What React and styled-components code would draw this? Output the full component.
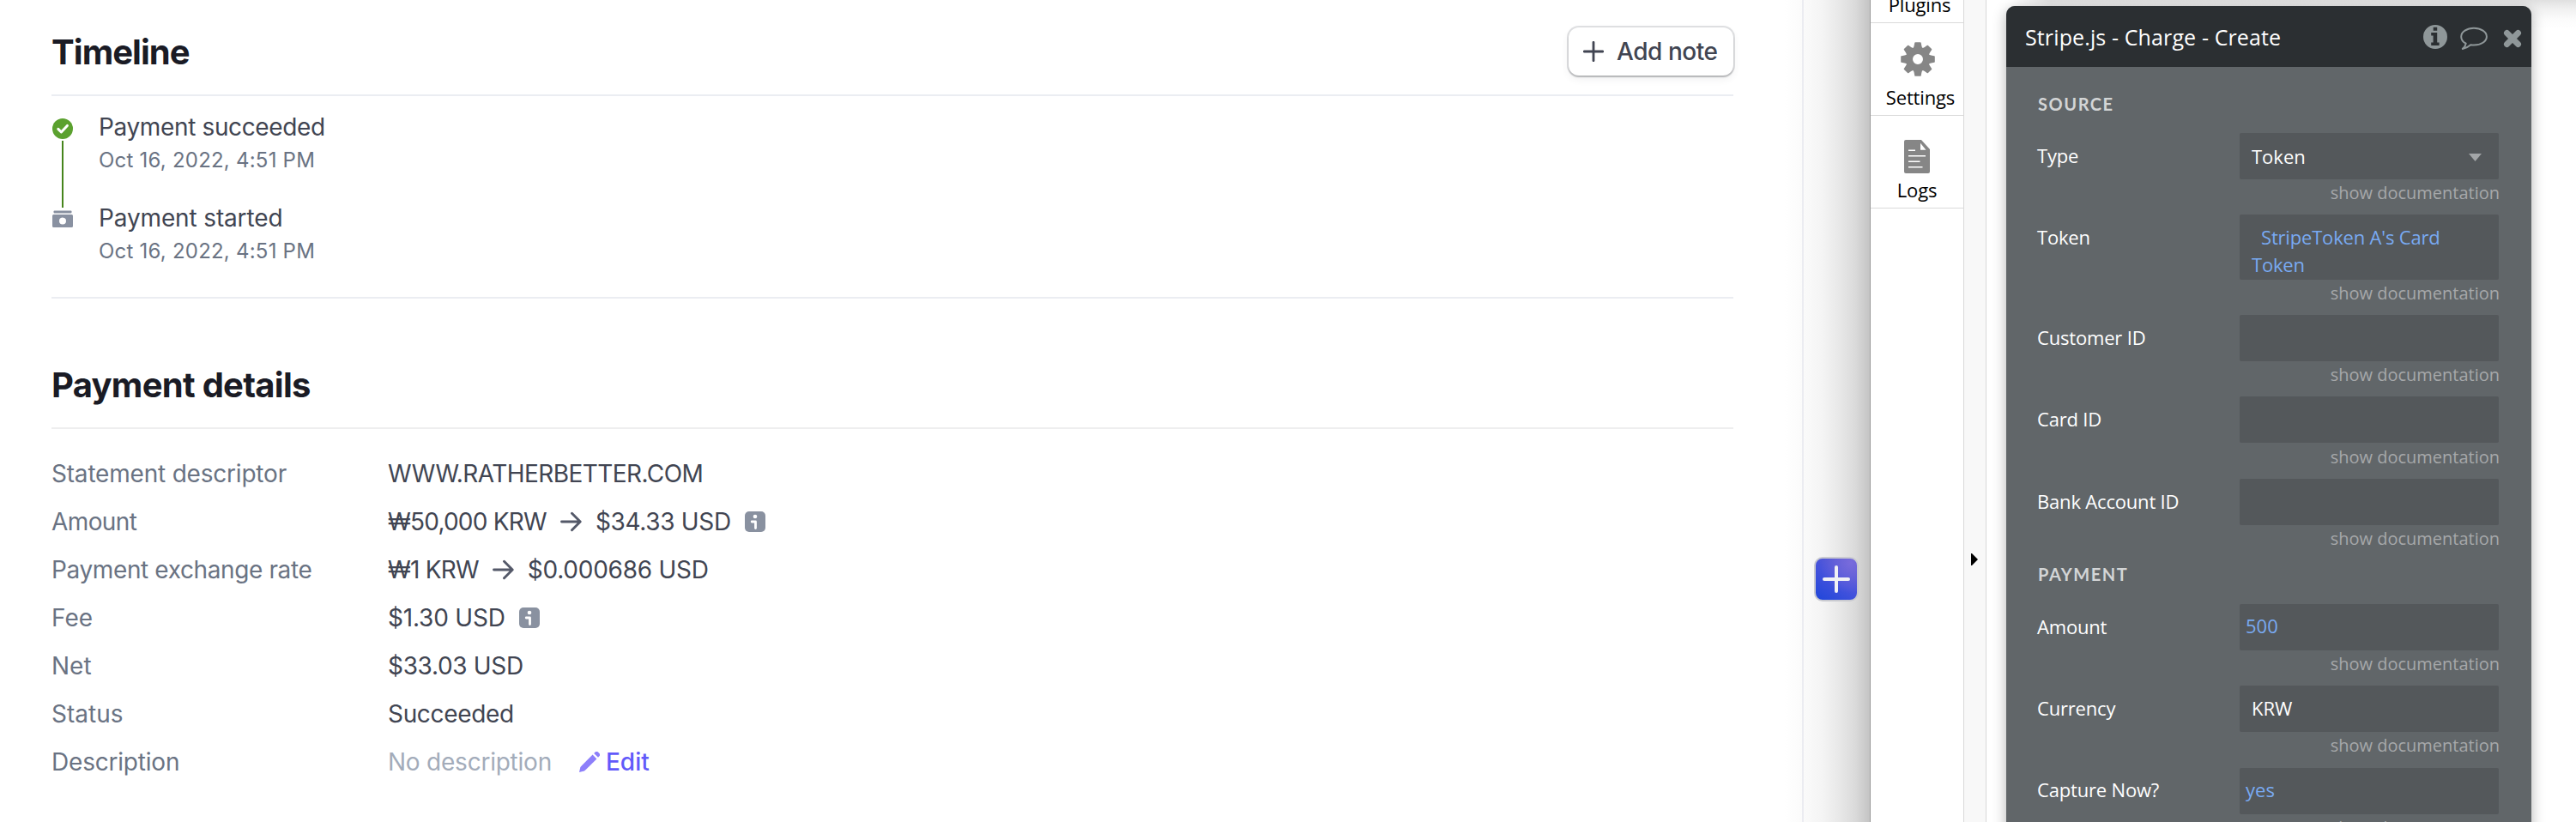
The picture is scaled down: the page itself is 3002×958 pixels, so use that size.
import React from "react";
import styled, { createGlobalStyle } from "styled-components";

const Global = createGlobalStyle`
  *, *::before, *::after { box-sizing: border-box; }
  body { margin: 0; background: #fff; }
`;

const Page = styled.div`
  display: flex;
  width: 3002px;
  height: 958px;
  overflow: hidden;
  background:
    linear-gradient(to right, #ffffff 0, #fbfbfb 20px, #f4f4f4 44px, #e9e9e9 62px, #dadada 82px, #c4c4c4 99px, #9d9d9d 99px, #9d9d9d 100px) 2080px 0 / 100px 100% no-repeat,
    #ffffff;
`;

const Dashboard = styled.main`
  width: 2102px;
  padding: 10px 80px 0 60px;
  border-right: 2px solid #ebecf1;
  font-family: Inter, "Liberation Sans", sans-serif;
  color: #414552;
`;

const SectionHeader = styled.header`
  display: flex;
  align-items: center;
  justify-content: space-between;
  height: ${(p) => p.$height}px;
  padding-top: ${(p) => p.$top || 0}px;
  border-bottom: 2px solid ${(p) => p.$line || "#ebedf2"};
`;

const Heading = styled.h2`
  margin: 0;
  padding-top: ${(p) => p.$drop || 0}px;
  font-size: 40px;
  line-height: 56px;
  font-weight: 700;
  letter-spacing: ${(p) => p.$track || 0}px;
  color: #1a1b25;
`;

const NoteButton = styled.button`
  display: flex;
  align-items: center;
  gap: 15px;
  width: 192px;
  height: 56px;
  padding: 0 0 0 17px;
  border: 0;
  border-radius: 12px;
  background: #fff;
  box-shadow: 0 2px 2px rgba(0, 0, 0, 0.16), 0 0 0 2px rgba(64, 68, 82, 0.16), 0 4px 10px rgba(64, 68, 82, 0.08);
  font: 500 28px/40px Inter, "Liberation Sans", sans-serif;
  letter-spacing: -0.45px;
  white-space: nowrap;
  color: #414552;
  svg { flex: none; }
`;

const Timeline = styled.ol`
  display: flex;
  flex-direction: column;
  height: 236px;
  margin: 0;
  padding: 16px 0 0;
  list-style: none;
  border-bottom: 2px solid #ebedf2;
`;

const Event = styled.li`
  display: flex;
  gap: 30px;
  height: 106px;
  padding-left: 1px;
`;

const Rail = styled.div`
  display: flex;
  flex-direction: column;
  align-items: center;
  gap: 2px;
  width: 24px;
  padding-top: 10px;
  svg { flex: none; }
`;

const Connector = styled.span`
  flex: none;
  width: 2px;
  height: 78px;
  background: #46851c;
`;

const EventTitle = styled.div`
  font-size: 28px;
  line-height: 40px;
  letter-spacing: ${(p) => p.$track || 0}px;
`;

const EventTime = styled.div`
  margin-top: 3px;
  font-size: 24px;
  line-height: 32px;
  letter-spacing: 0.22px;
  color: #6a7383;
`;

const Details = styled.dl`
  margin: 0;
  padding-top: 24px;
`;

const Row = styled.div`
  display: flex;
  align-items: center;
  height: 56px;
  font-size: 28px;
  line-height: 40px;
`;

const Term = styled.dt`
  width: 392px;
  letter-spacing: ${(p) => p.$track || 0}px;
  color: #6a7383;
`;

const Value = styled.dd`
  display: flex;
  align-items: center;
  gap: 16px;
  margin: 0;
`;

const Figure = styled.span`
  letter-spacing: ${(p) => p.$track || 0}px;
`;

const Muted = styled.span`
  margin-right: 16px;
  letter-spacing: -0.23px;
  color: #a3acba;
`;

const EditLink = styled.a`
  display: flex;
  align-items: center;
  gap: 7px;
  font-weight: 500;
  color: #625afa;
`;

const Gutter = styled.div`
  width: 78px;
  padding: 649px 12px 0;
`;

const Badge = styled.div`
  display: flex;
  align-items: center;
  justify-content: center;
  width: 52px;
  height: 52px;
  border-radius: 10px;
  border: 2px solid #c9cad0;
  background: radial-gradient(circle at 85% 10%, #786bdc 0%, rgba(120, 107, 220, 0) 60%), linear-gradient(35deg, #1f46da 0%, #4653dc 50%, #5b5ace 100%);
`;

const Sidebar = styled.nav`
  width: 109px;
  background: #fff;
  border-right: 1px solid #d9d9d9;
  font-family: "Open Sans", "Noto Sans", sans-serif;
`;

const Tool = styled.div`
  display: flex;
  flex-direction: column;
  align-items: center;
  justify-content: flex-end;
  height: ${(p) => p.$height || 108}px;
  padding: 0 0 6px ${(p) => p.$indent || 0}px;
  border-bottom: 1px solid #dadada;
  font-size: 22px;
  line-height: 30px;
  letter-spacing: -0.15px;
  overflow: hidden;
  color: #000;
  svg {
    flex: none;
    margin-bottom: ${(p) => p.$gap || 0}px;
    margin-right: ${(p) => p.$nudge || 0}px;
  }
`;

const Handle = styled.div`
  width: 26px;
  padding: 645px 0 0 8px;
  background: #f8f8f8;
  border-right: 1px solid #d9d9d9;
  svg { display: block; }
`;

const Canvas = styled.section`
  flex: 1;
  padding: 7px 0 0 23px;
  background:
    linear-gradient(to right, #ffffff 30px, rgba(255, 255, 255, 0) 75px),
    linear-gradient(to bottom, #e0e0e0 0, #f0f0f0 10px, #fbfbfb 22px, #ffffff 34px);
  font-family: "Open Sans", "Noto Sans", sans-serif;
`;

const Panel = styled.div`
  width: 612px;
  height: 1100px;
  border-radius: 10px;
  background: #616669;
  box-shadow: 0 4px 16px rgba(0, 0, 0, 0.3);
`;

const PanelHeader = styled.header`
  display: flex;
  align-items: center;
  height: 71px;
  padding: 0 11px 0 22px;
  border-radius: 10px 10px 0 0;
  background: #2b2f32;
  color: #fff;
  font-size: 25px;
  line-height: 36px;
  letter-spacing: 0.12px;
`;

const PanelTitle = styled.span`
  flex: 1;
  padding-top: 1px;
`;

const SectionLabel = styled.h3`
  margin: 0;
  height: ${(p) => p.$height}px;
  padding: ${(p) => p.$top}px 0 0 37px;
  font: 700 20px/26px Lato, "Open Sans", sans-serif;
  letter-spacing: 1.55px;
  color: #d3d5d6;
`;

const Field = styled.div`
  display: flex;
  padding-left: 36px;
`;

const Label = styled.label`
  width: 236px;
  font-size: 22px;
  line-height: ${(p) => (p.$raised ? 51 : 53)}px;
  letter-spacing: -0.18px;
  color: #fff;
`;

const Control = styled.div`
  width: 302px;
`;

const Box = styled.div`
  display: flex;
  justify-content: space-between;
  height: ${(p) => p.$height || 54}px;
  padding: ${(p) => p.$drop || 0}px 20px 0 ${(p) => (p.$tight ? 7 : 14)}px;
  border-radius: 2px;
  background: #54585b;
  font-size: 22px;
  line-height: ${(p) => (p.$tight ? 51 : 53)}px;
  color: ${(p) => (p.$expr ? "#79aaf2" : "#fff")};
  svg { margin-top: 23px; }
`;

const Expression = styled.div`
  padding-top: 11px;
  line-height: 31.6px;
  letter-spacing: -0.18px;
  text-indent: 11px;
`;

const Doc = styled.div`
  height: ${(p) => p.$height || 41}px;
  margin-right: -1px;
  padding-top: ${(p) => p.$drop || 0}px;
  font-size: 20px;
  line-height: 32px;
  text-align: right;
  color: #a6a8aa;
`;

const Check = () => (
  <svg width="24" height="24" viewBox="0 0 24 24">
    <circle cx="12" cy="12" r="12" fill="#5ba12f" />
    <path d="M6.8 12.4l3.6 3.6 7-7.6" fill="none" stroke="#fff" strokeWidth="3" strokeLinecap="round" strokeLinejoin="round" />
  </svg>
);

const Cash = () => (
  <svg width="24" height="24" viewBox="0 0 24 24">
    <rect x="1.5" y="1.5" width="21" height="3" rx="1" fill="#8991a1" />
    <path
      fillRule="evenodd"
      d="M1.5 6h21A1.5 1.5 0 0 1 24 7.500v12a1.500 1.500 0 0 1-1.500 1.500h-21A1.500 1.500 0 0 1 0 19.500v-12A1.500 1.500 0 0 1 1.500 6zM12 9.500a4 4 0 1 0 0 8 4 4 0 0 0 0-8z"
      fill="#8991a1"
    />
  </svg>
);

const Plus = () => (
  <svg width="24" height="24" viewBox="0 0 24 24">
    <path d="M12 1.300v21.400M1.300 12h21.400" stroke="#414552" strokeWidth="2.800" strokeLinecap="round" />
  </svg>
);

const Arrow = () => (
  <svg width="25" height="24" viewBox="0 0 25 24">
    <path d="M1.500 12H23M13.500 2.300L23.200 12l-9.700 9.700" fill="none" stroke="#545969" strokeWidth="2.900" strokeLinecap="round" strokeLinejoin="round" />
  </svg>
);

const Info = () => (
  <svg width="24" height="24" viewBox="0 0 24 24">
    <rect width="24" height="24" rx="5" fill="#8991a0" />
    <circle cx="12" cy="6" r="2.300" fill="#fff" />
    <path d="M8.200 12h4.300v7.500" fill="none" stroke="#fff" strokeWidth="2.800" strokeLinecap="round" strokeLinejoin="round" />
  </svg>
);

const Pencil = () => (
  <svg width="24" height="24" viewBox="0 0 24 24" fill="#8d7ffa">
    <path d="M15.600 3.600l4.800 4.800L8 20.800 6 22.600 0 24l1.400-6 1.800-2z" />
    <path d="M17.200 2l1.200-1.200a2.700 2.700 0 0 1 3.800 0l1 1a2.700 2.700 0 0 1 0 3.800L22 6.800z" />
  </svg>
);

const BadgePlus = () => (
  <svg width="32" height="32" viewBox="0 0 32 32">
    <path d="M16 2v28M2 16h28" stroke="#f1f1f4" strokeWidth="4" strokeLinecap="round" />
  </svg>
);

const Gear = () => (
  <svg width="40" height="40" viewBox="-20 -20 40 40">
    <circle r="10" fill="none" stroke="#868686" strokeWidth="8" />
    {[0, 45, 90, 135, 180, 225, 270, 315].map((angle) => (
      <path
        key={angle}
        d="M-6-12.400Q-4.700-13.500-4.400-15.500L-3.700-19.200Q-3.500-19.800-2.900-19.800H2.900Q3.500-19.800 3.700-19.200L4.400-15.500Q4.700-13.500 6-12.400L4-10H-4z"
        fill="#868686"
        transform={`rotate(${angle})`}
      />
    ))}
  </svg>
);

const Log = () => (
  <svg width="30" height="39" viewBox="0 0 30 39">
    <path d="M2 0h18l10 11v26a2 2 0 0 1-2 2H2a2 2 0 0 1-2-2V2a2 2 0 0 1 2-2z" fill="#868686" />
    <path d="M19 3.800v8h6.500z" fill="#fff" />
    <path d="M5 12.200h8M5 18.700h20M5 25.200h13.500M5 31.700h16.500" stroke="#fff" strokeWidth="1.600" />
  </svg>
);

const Caret = () => (
  <svg width="8" height="14" viewBox="0 0 8 14">
    <path d="M0 0h1l7 7-7 7H0z" fill="#000" />
  </svg>
);

const SelectArrow = () => (
  <svg width="15" height="9" viewBox="0 0 15 9">
    <path d="M0 0h15L7.500 9z" fill="#a3a6a8" />
  </svg>
);

const PanelIcons = () => (
  <svg width="115" height="32" viewBox="0 0 115 32" fill="#8f9799">
    <path fillRule="evenodd" d="M14 2a14 14 0 1 0 0 28 14 14 0 0 0 0-28zM11.700 4.700h4.500v4h-4.500zM9.200 11h7v11.500h2.400V26H9.200v-3.500h2.400v-8H9.200z" />
    <path
      d="M59 5.800c8.200 0 14.900 4.400 14.900 9.900S67.200 25.600 59 25.600c-1.300 0-2.500-.1-3.700-.3-2.500 2.200-5.500 4-9.500 4.600 2-1.600 3.400-3.600 3.900-6.200-3.400-1.800-5.500-4.700-5.500-8 0-5.500 6.600-9.900 14.800-9.900z"
      fill="none"
      stroke="#8f9799"
      strokeWidth="2"
      strokeLinejoin="round"
    />
    <path d="M97.500 11.500l13 13M110.500 11.500l-13 13" stroke="#8f9799" strokeWidth="7" strokeLinecap="round" />
  </svg>
);

const DocLink = ({ height, drop }) => (
  <Doc $height={height} $drop={drop}>show documentation</Doc>
);

export default function App() {
  return (
    <Page>
      <Global />
      <Dashboard>
        <SectionHeader $height={102}>
          <Heading $track={-0.95} $drop={2}>Timeline</Heading>
          <NoteButton><Plus />Add note</NoteButton>
        </SectionHeader>
        <Timeline>
          <Event>
            <Rail><Check /><Connector /></Rail>
            <div>
              <EventTitle $track={-0.36}>Payment succeeded</EventTitle>
              <EventTime>Oct 16, 2022, 4:51 PM</EventTime>
            </div>
          </Event>
          <Event>
            <Rail><Cash /></Rail>
            <div>
              <EventTitle $track={-0.14}>Payment started</EventTitle>
              <EventTime>Oct 16, 2022, 4:51 PM</EventTime>
            </div>
          </Event>
        </Timeline>
        <SectionHeader $height={152} $top={52} $line="#eeeeef">
          <Heading $track={-0.72}>Payment details</Heading>
        </SectionHeader>
        <Details>
          <Row>
            <Term $track={-0.2}>Statement descriptor</Term>
            <Value><Figure $track={-0.55}>WWW.RATHERBETTER.COM</Figure></Value>
          </Row>
          <Row>
            <Term $track={-0.6}>Amount</Term>
            <Value>
              <Figure $track={-0.77}>₩50,000 KRW</Figure>
              <Arrow />
              <Figure $track={-0.33}>$34.33 USD</Figure>
              <Info />
            </Value>
          </Row>
          <Row>
            <Term $track={-0.38}>Payment exchange rate</Term>
            <Value>
              <Figure $track={-0.76}>₩1 KRW</Figure>
              <Arrow />
              <Figure $track={-0.25}>$0.000686 USD</Figure>
            </Value>
          </Row>
          <Row>
            <Term>Fee</Term>
            <Value><Figure $track={-0.2}>$1.30 USD</Figure><Info /></Value>
          </Row>
          <Row>
            <Term>Net</Term>
            <Value><Figure $track={-0.33}>$33.03 USD</Figure></Value>
          </Row>
          <Row>
            <Term>Status</Term>
            <Value><Figure $track={-0.33}>Succeeded</Figure></Value>
          </Row>
          <Row>
            <Term $track={-0.2}>Description</Term>
            <Value><Muted>No description</Muted><EditLink><Pencil />Edit</EditLink></Value>
          </Row>
        </Details>
      </Dashboard>
      <Gutter><Badge><BadgePlus /></Badge></Gutter>
      <Sidebar>
        <Tool $height={27} $indent={6}>Plugins</Tool>
        <Tool $gap={9} $indent={8} $nudge={6}><Gear />Settings</Tool>
        <Tool $gap={4}><Log />Logs</Tool>
      </Sidebar>
      <Handle><Caret /></Handle>
      <Canvas>
        <Panel>
          <PanelHeader><PanelTitle>Stripe.js - Charge - Create</PanelTitle><PanelIcons /></PanelHeader>
          <SectionLabel $height={77} $top={30}>SOURCE</SectionLabel>
          <Field>
            <Label>Type</Label>
            <Control><Box $drop={1}>Token<SelectArrow /></Box><DocLink /></Control>
          </Field>
          <Field>
            <Label>Token</Label>
            <Control><Box $expr $height={76}><Expression>StripeToken A's Card Token</Expression></Box><DocLink /></Control>
          </Field>
          <Field>
            <Label>Customer ID</Label>
            <Control><Box /><DocLink /></Control>
          </Field>
          <Field>
            <Label>Card ID</Label>
            <Control><Box /><DocLink height={42} drop={1} /></Control>
          </Field>
          <Field>
            <Label>Bank Account ID</Label>
            <Control><Box /><DocLink /></Control>
          </Field>
          <SectionLabel $height={51} $top={3}>PAYMENT</SectionLabel>
          <Field>
            <Label>Amount</Label>
            <Control><Box $expr $tight>500</Box><DocLink /></Control>
          </Field>
          <Field>
            <Label>Currency</Label>
            <Control><Box>KRW</Box><DocLink height={42} /></Control>
          </Field>
          <Field>
            <Label $raised>Capture Now?</Label>
            <Control><Box $expr $tight>yes</Box><DocLink /></Control>
          </Field>
        </Panel>
      </Canvas>
    </Page>
  );
}
